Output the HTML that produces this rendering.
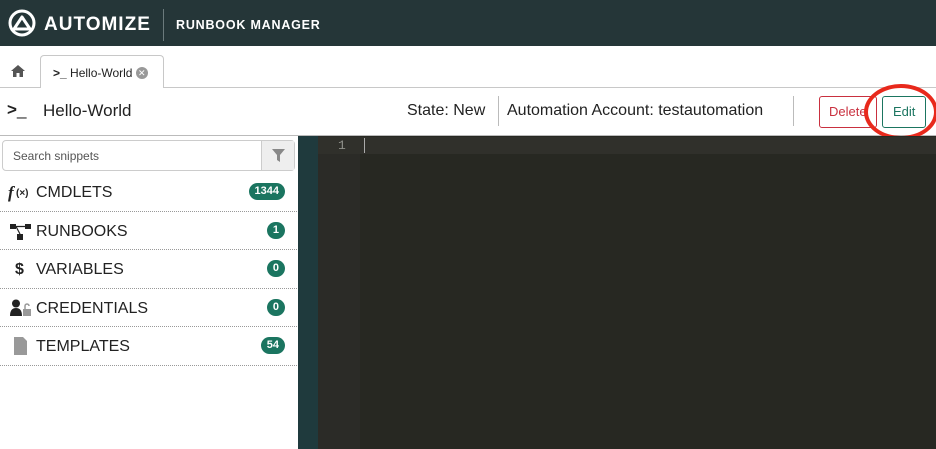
<!DOCTYPE html>
<html><head><style>
*{box-sizing:border-box;margin:0;padding:0}
body{width:936px;height:449px;overflow:hidden;font-family:"Liberation Sans",Arial,sans-serif;background:#fff;position:relative;color:#222}
.hdr{position:absolute;left:0;top:0;width:936px;height:46px;background:#253638}
.tabs{position:absolute;top:46px;left:0;width:936px;height:42px;background:#fff;border-bottom:1px solid #c8c8c8}
.tab{position:absolute;left:40px;top:9px;width:124px;height:34px;background:#fff;border:1px solid #c8c8c8;border-bottom:none;border-radius:4px 4px 0 0;font-size:12px;padding:10px 0 0 12px}
.title{position:absolute;top:88px;left:0;width:936px;height:48px;border-bottom:1px solid #bbb;background:#fff}
.side{position:absolute;left:0;top:136px;width:298px;height:313px;background:#fff}
.item{position:absolute;left:0;width:297px;height:38.5px;border-bottom:1px dotted #999;font-size:16px}
.item span.t{position:absolute;left:36px;top:11px}
.badge{position:absolute;right:12px;top:10px;background:#1b7560;color:#fff;font-size:11px;font-weight:bold;border-radius:9px;height:17px;line-height:17px;padding:0 6px;min-width:17px;text-align:center}
</style></head><body>
<div class="hdr">
<svg style="position:absolute;left:8px;top:9px" width="28" height="28" viewBox="0 0 28 28"><circle cx="14" cy="14" r="12" fill="none" stroke="#fff" stroke-width="3"/><path d="M6 20 L14 8 L22 20 Z" fill="none" stroke="#fff" stroke-width="3" stroke-linejoin="round"/></svg>
<div style="position:absolute;left:44px;top:14px;color:#fff;font-weight:bold;font-size:19px;letter-spacing:1px">AUTOMIZE</div>
<div style="position:absolute;left:163px;top:9px;width:1px;height:32px;background:#6b7a7c"></div>
<div style="position:absolute;left:176px;top:18px;color:#fff;font-weight:bold;font-size:12.5px;letter-spacing:.8px">RUNBOOK MANAGER</div>
</div>
<div class="tabs">
<svg style="position:absolute;left:11px;top:19px" width="14" height="12" viewBox="0 0 14 12"><path d="M7 0 L14 6 L12 6 L12 12 L8.5 12 L8.5 8 L5.5 8 L5.5 12 L2 12 L2 6 L0 6 Z" fill="#555"/></svg>
<div class="tab"><b style="font-size:12px">&gt;_</b> Hello-World <span style="display:inline-block;width:12px;height:12px;border-radius:6px;background:#999;color:#fff;font-size:9px;text-align:center;line-height:12px;vertical-align:1px">✕</span></div>
</div>
<div class="title">
<div style="position:absolute;left:7px;top:12px;font-size:17px;font-weight:bold">&gt;<span style="font-weight:normal">_</span></div>
<div style="position:absolute;left:43px;top:13px;font-size:17px">Hello-World</div>
<div style="position:absolute;left:407px;top:14px;font-size:16px">State: New</div>
<div style="position:absolute;left:498px;top:8px;width:1px;height:30px;background:#bbb"></div>
<div style="position:absolute;left:507px;top:14px;font-size:16px">Automation Account: testautomation</div>
<div style="position:absolute;left:793px;top:8px;width:1px;height:30px;background:#bbb"></div>
<div style="position:absolute;left:819px;top:8px;width:58px;height:32px;border:1px solid #c9303f;border-radius:3px;color:#c9303f;font-size:13px;line-height:30px;padding-left:9px">Delete</div>
<div style="position:absolute;left:882px;top:8px;width:44px;height:32px;border:1px solid #1b7560;border-radius:3px;color:#1b7560;font-size:13px;line-height:30px;padding-left:10px;background:#fff">Edit</div>
<div style="position:absolute;left:864px;top:-4px;width:74px;height:56px;border:4px solid #e8291c;border-radius:50%"></div>
</div>
<div class="side">
<div style="position:absolute;left:2px;top:4px;width:293px;height:31px;border:1px solid #ccc;border-radius:4px;background:#fff;font-size:12px;color:#555;padding:8px 0 0 10px">Search snippets
<div style="position:absolute;right:0;top:0;width:33px;height:29px;background:#eee;border-left:1px solid #ccc"><svg style="position:absolute;left:10px;top:8px" width="13" height="13" viewBox="0 0 13 13"><path d="M0 0 H13 L8 6 V13 L5 11 V6 Z" fill="#888"/></svg></div></div>
<div class="item" style="top:37px"><span style="position:absolute;left:8px;top:10px;font-size:17px;font-weight:bold;font-family:'Liberation Serif',serif;font-style:italic">f</span><span style="position:absolute;left:16px;top:15px;font-size:10px;font-weight:bold">(×)</span><span class="t">CMDLETS</span><span class="badge">1344</span></div>
<div class="item" style="top:75.5px"><svg style="position:absolute;left:10px;top:12px" width="22" height="16" viewBox="0 0 22 16"><rect x="0" y="0" width="6" height="5" fill="#222"/><rect x="15" y="0" width="6" height="5" fill="#222"/><rect x="7" y="10" width="6" height="6" fill="#222"/><path d="M6 2.5 H15 M6 2.5 L10 10" stroke="#222" stroke-width="1.2"/></svg><span class="t">RUNBOOKS</span><span class="badge">1</span></div>
<div class="item" style="top:114px"><span style="position:absolute;left:15px;top:11px;font-weight:bold">$</span><span class="t">VARIABLES</span><span class="badge">0</span></div>
<div class="item" style="top:152.5px"><svg style="position:absolute;left:10px;top:10px" width="22" height="18" viewBox="0 0 22 18"><circle cx="6" cy="4.5" r="4" fill="#222"/><path d="M0 17 Q0 9 6 9 Q12 9 12 17 Z" fill="#222"/><rect x="13" y="10" width="8" height="7" fill="#999"/><path d="M15 10 V7 A2 2 0 0 1 19 7" stroke="#999" stroke-width="1.5" fill="none"/></svg><span class="t">CREDENTIALS</span><span class="badge">0</span></div>
<div class="item" style="top:191px"><svg style="position:absolute;left:14px;top:10px" width="13" height="18" viewBox="0 0 13 18"><path d="M0 0 H9 L13 4 V18 H0 Z" fill="#999"/></svg><span class="t">TEMPLATES</span><span class="badge">54</span></div>
</div>
<div style="position:absolute;left:298px;top:136px;width:20px;height:313px;background:#1f3a3d"></div>
<div style="position:absolute;left:318px;top:136px;width:42px;height:313px;background:#2b2b27"></div>
<div style="position:absolute;left:360px;top:136px;width:576px;height:313px;background:#272822"></div>
<div style="position:absolute;left:318px;top:137px;width:618px;height:17px;background:#30302b"></div>
<div style="position:absolute;left:338px;top:138px;font-family:'Liberation Mono',monospace;font-size:13px;color:#8f908a">1</div>
<div style="position:absolute;left:364px;top:138px;width:1px;height:15px;background:#aaa"></div>
</body></html>
